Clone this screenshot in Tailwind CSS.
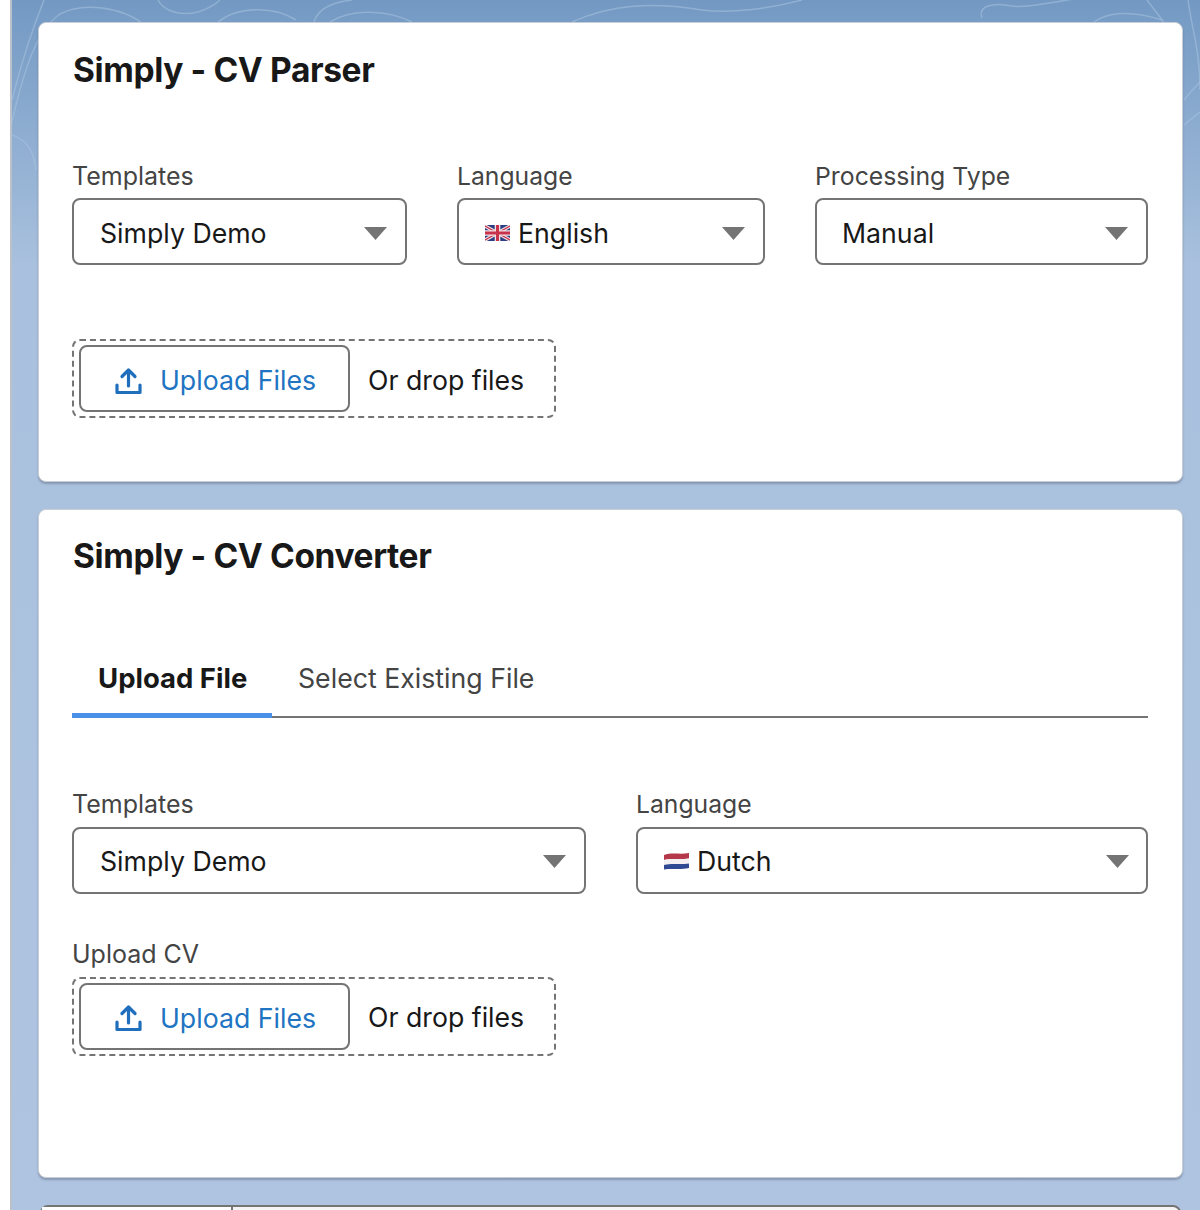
<!DOCTYPE html>
<html lang="en">
<head>
    <meta charset="UTF-8">
    <title>Simply - CV Tools</title>
    <script src="https://cdn.jsdelivr.net/npm/@tailwindcss/browser@4"></script>
</head>
<body class="font-['Inter','Liberation_Sans',sans-serif] bg-white">
<div class="flex w-[1200px] h-[1210px] overflow-hidden">
    <!-- window edge -->
    <div class="w-[12px] shrink-0 bg-white border-r-2 border-[#bcc1c9]"></div>

    <!-- page background -->
    <main class="relative flex-1 bg-gradient-to-b from-[#7399c3] via-[#a9c1de] via-[22%] to-[#afc4e1] pl-[26px] pr-[17px] pt-[22px]">
        <svg class="absolute left-0 top-0" width="1188" height="230" fill="none" stroke="#a8c3df" stroke-opacity="0.55" stroke-width="1.5">
            <path d="M0 100C10 60 20 30 32 0"/>
            <path d="M-2 130C14 60 26 30 48 14C70 2 110 6 134 26"/>
            <path d="M146 0C152 12 170 16 186 12C198 8 204 4 208 0"/>
            <path d="M206 22C226 6 262 6 284 20"/>
            <path d="M302 22C306 8 322 2 340 0M318 22C340 8 376 10 400 22"/>
            <path d="M560 22C600 4 640 2 690 10C720 14 760 8 790 0"/>
            <path d="M970 18C966 6 980 2 1000 6C1012 8 1030 4 1068 -2"/>
            <path d="M1082 22C1096 12 1120 10 1150 20"/>
            <path d="M1135 0C1150 20 1160 30 1164 50M1176 0C1180 30 1188 50 1188 90"/>
            <path d="M1172 100C1180 90 1186 84 1188 82M1172 125C1180 118 1186 114 1188 112"/>
            <path d="M0 135C14 140 22 150 24 170"/>
        </svg>

        <div class="relative flex flex-col gap-[27px]">
            <!-- CV Parser card -->
            <section class="h-[460px] rounded-[8px] bg-white border border-[#c9ced6] shadow-[0_2px_2px_rgba(90,100,120,0.45)] pl-[33px] pr-[34px] pt-[27px]">
                <h2 class="ml-[1px] text-[33.500px] leading-[40px] font-bold text-[#181818] tracking-[-0.38px]">Simply - CV Parser</h2>

                <div class="grid grid-cols-[335px_308px_333px] gap-x-[50px] mt-[71px]">
                    <div>
                        <label class="block text-[25px] leading-[30px] text-[#444444] mb-[7px]">Templates</label>
                        <div class="flex items-center justify-between h-[67px] rounded-[8px] border-2 border-[#747474] pl-[26px] pr-[18px] pt-[4px]">
                            <span class="text-[26.700px] text-[#181818]">Simply Demo</span>
                            <svg width="23" height="13" viewBox="0 0 23 13"><path d="M0 0H23L11.5 13Z" fill="#747474"/></svg>
                        </div>
                    </div>
                    <div>
                        <label class="block text-[24.700px] leading-[30px] text-[#444444] mb-[7px]">Language</label>
                        <div class="flex items-center justify-between h-[67px] rounded-[8px] border-2 border-[#747474] pl-[26px] pr-[18px] pt-[4px]">
                            <span class="flex items-center gap-[8px] text-[26.700px] text-[#181818]">
                                <svg width="25" height="18" viewBox="0 0 25 18">
                                    <rect y="1" width="25" height="16" rx="1.5" fill="#2b3f82"/>
                                    <path d="M0 2L25 16M25 2L0 16" stroke="#f1e3e6" stroke-width="3.4"/>
                                    <path d="M0 2L25 16M25 2L0 16" stroke="#c8324a" stroke-width="1.2"/>
                                    <path d="M12.5 1V17M0 9H25" stroke="#f1e3e6" stroke-width="5.6"/>
                                    <path d="M12.5 1V17M0 9H25" stroke="#c8324a" stroke-width="3"/>
                                </svg>
                                English
                            </span>
                            <svg width="23" height="13" viewBox="0 0 23 13"><path d="M0 0H23L11.5 13Z" fill="#747474"/></svg>
                        </div>
                    </div>
                    <div>
                        <label class="block text-[24.800px] leading-[30px] text-[#444444] mb-[7px]">Processing Type</label>
                        <div class="flex items-center justify-between h-[67px] rounded-[8px] border-2 border-[#747474] pl-[25px] pr-[18px] pt-[4px]">
                            <span class="text-[26.700px] text-[#181818]">Manual</span>
                            <svg width="23" height="13" viewBox="0 0 23 13"><path d="M0 0H23L11.5 13Z" fill="#747474"/></svg>
                        </div>
                    </div>
                </div>

                <div class="flex items-center w-[484px] h-[79px] mt-[74px] rounded-[8px] border-2 border-dashed border-[#747474] pl-[5px]">
                    <div class="flex items-center gap-[18px] w-[271px] h-[67px] rounded-[8px] border-2 border-[#747474] pl-[34px] pt-[4px]">
                        <svg width="27" height="28" viewBox="0 0 27 28" fill="none" stroke="#1f6fbd" stroke-width="3.2" stroke-linecap="round" stroke-linejoin="round">
                            <path d="M13.5 19V3M7 9.5L13.500 3L20 9.500"/>
                            <path d="M2 18V25.500H25V18"/>
                        </svg>
                        <span class="text-[26.700px] text-[#2174c2]">Upload Files</span>
                    </div>
                    <span class="ml-[18px] pt-[3px] text-[26.700px] text-[#181818]">Or drop files</span>
                </div>
            </section>

            <!-- CV Converter card -->
            <section class="h-[669px] rounded-[8px] bg-white border border-[#c9ced6] shadow-[0_2px_2px_rgba(90,100,120,0.45)] pl-[33px] pr-[34px] pt-[26px]">
                <h2 class="ml-[1px] text-[33.500px] leading-[40px] font-bold text-[#181818] tracking-[-0.38px]">Simply - CV Converter</h2>

                <div class="flex h-[92px] mt-[50px] border-b-2 border-[#747474]">
                    <div class="w-[200px] h-[92px] pt-[34px] pl-[26px] border-b-[5px] border-[#4a90e8] text-[27.500px] leading-[36px] font-bold text-[#181818]">Upload File</div>
                    <div class="pt-[34px] pl-[26px] text-[26.700px] leading-[36px] text-[#444444]">Select Existing File</div>
                </div>

                <div class="grid grid-cols-[514px_512px] gap-x-[50px] mt-[71px]">
                    <div>
                        <label class="block text-[25px] leading-[30px] text-[#444444] mb-[8px]">Templates</label>
                        <div class="flex items-center justify-between h-[67px] rounded-[8px] border-2 border-[#747474] pl-[26px] pr-[18px] pt-[2px]">
                            <span class="text-[26.700px] text-[#181818]">Simply Demo</span>
                            <svg width="23" height="13" viewBox="0 0 23 13"><path d="M0 0H23L11.5 13Z" fill="#747474"/></svg>
                        </div>
                    </div>
                    <div>
                        <label class="block text-[24.700px] leading-[30px] text-[#444444] mb-[8px]">Language</label>
                        <div class="flex items-center justify-between h-[67px] rounded-[8px] border-2 border-[#747474] pl-[26px] pr-[17px] pt-[2px]">
                            <span class="flex items-center gap-[8px] text-[26.700px] text-[#181818]">
                                <svg width="25" height="18" viewBox="0 0 25 18">
                                    <path d="M0 3C8 0 16 3 25 1V6.500C16 8 8 6 0 8Z" fill="#b5384a"/>
                                    <path d="M0 8C8 6 16 8 25 6.500V11.500C16 13 8 11 0 13Z" fill="#f4f0f1"/>
                                    <path d="M0 13C8 11 16 13 25 11.500V16C16 18 8 16 0 17.500Z" fill="#2f4a93"/>
                                </svg>
                                Dutch
                            </span>
                            <svg width="23" height="13" viewBox="0 0 23 13"><path d="M0 0H23L11.5 13Z" fill="#747474"/></svg>
                        </div>
                    </div>
                </div>

                <label class="block mt-[45px] mb-[8px] text-[25px] leading-[30px] text-[#444444]">Upload CV</label>
                <div class="flex items-center w-[484px] h-[79px] rounded-[8px] border-2 border-dashed border-[#747474] pl-[5px]">
                    <div class="flex items-center gap-[18px] w-[271px] h-[67px] rounded-[8px] border-2 border-[#747474] pl-[34px] pt-[3px]">
                        <svg width="27" height="28" viewBox="0 0 27 28" fill="none" stroke="#1f6fbd" stroke-width="3.2" stroke-linecap="round" stroke-linejoin="round">
                            <path d="M13.5 19V3M7 9.5L13.500 3L20 9.500"/>
                            <path d="M2 18V25.500H25V18"/>
                        </svg>
                        <span class="text-[26.700px] text-[#2174c2]">Upload Files</span>
                    </div>
                    <span class="ml-[18px] pt-[2px] text-[26.700px] text-[#181818]">Or drop files</span>
                </div>
            </section>

            <!-- next card, cut off by the window -->
            <section class="flex h-[60px] mx-[2px] rounded-t-[8px] bg-[#f4f4f4] border-2 border-[#747474]">
                <div class="w-[191px] bg-white border-r-2 border-[#747474]"></div>
            </section>
        </div>
    </main>
</div>
</body>
</html>
